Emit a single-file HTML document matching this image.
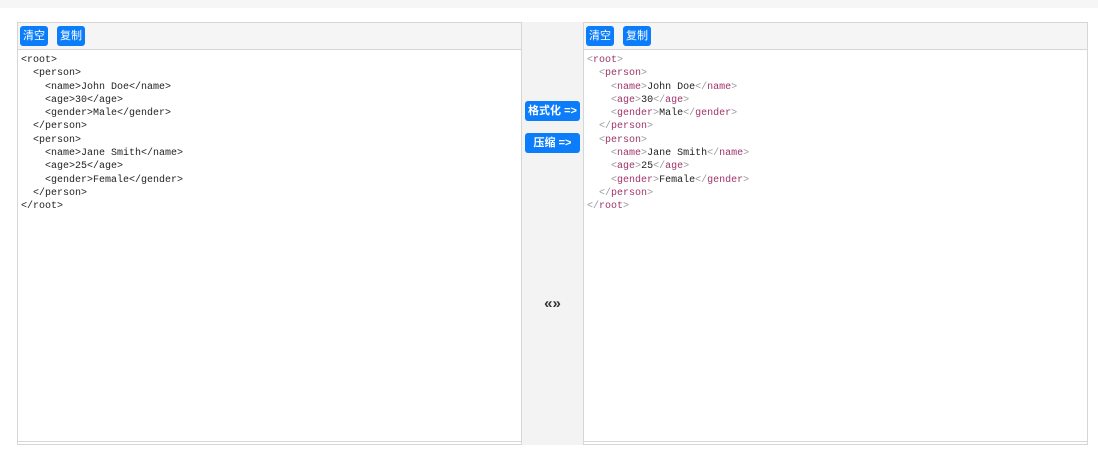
<!DOCTYPE html>
<html><head><meta charset="utf-8"><style>
body{margin:0;width:1098px;height:456px;background:#fff;position:relative;overflow:hidden;font-family:"Liberation Sans","Noto Sans CJK SC",sans-serif}
.top{position:absolute;left:0;top:0;width:1098px;height:8px;background:#f6f6f6}
.panel{position:absolute;top:22px;width:503px;height:418px;border:1px solid #d6d6d6;background:#fff}
.bar{height:26px;background:#f5f5f5;border-bottom:1px solid #d6d6d6;position:relative}
.btn{position:absolute;top:3px;height:20px;background:#0b7dfa;color:#fff;font-size:11px;line-height:20px;text-align:center;border-radius:3px}
pre{margin:0;padding:4px 0 0 3px;font-family:"Liberation Mono","DejaVu Sans Mono",monospace;font-size:10px;line-height:13.3px;color:#222}
.foot{position:absolute;bottom:-4px;left:-1px;width:503px;height:3px;border:1px solid #d6d6d6;border-top:none}
.mid{position:absolute;left:522px;top:22px;width:61px;height:423px;background:#f3f3f3}
.mb{position:absolute;left:3px;width:55px;height:20px;background:#0b7dfa;color:#fff;font-size:11px;font-weight:bold;line-height:20px;text-align:center;border-radius:3px}
.b{color:#999}.t{color:#a0336a}
</style></head><body>
<div class="top"></div>
<div class="panel" style="left:17px">
<div class="bar"><div class="btn" style="left:2px;width:28px">清空</div><div class="btn" style="left:39px;width:28px">复制</div></div>
<pre>&lt;root&gt;
  &lt;person&gt;
    &lt;name&gt;John Doe&lt;/name&gt;
    &lt;age&gt;30&lt;/age&gt;
    &lt;gender&gt;Male&lt;/gender&gt;
  &lt;/person&gt;
  &lt;person&gt;
    &lt;name&gt;Jane Smith&lt;/name&gt;
    &lt;age&gt;25&lt;/age&gt;
    &lt;gender&gt;Female&lt;/gender&gt;
  &lt;/person&gt;
&lt;/root&gt;</pre>
<div class="foot"></div>
</div>
<div class="mid">
<div class="mb" style="top:79px">格式化 =&gt;</div>
<div class="mb" style="top:111px">压缩 =&gt;</div>
<div style="position:absolute;left:0;width:61px;top:273px;text-align:center;font-size:15px;font-weight:bold;color:#333">«»</div>
</div>
<div class="panel" style="left:583px">
<div class="bar"><div class="btn" style="left:2px;width:28px">清空</div><div class="btn" style="left:39px;width:28px">复制</div></div>
<pre><span class="b">&lt;</span><span class="t">root</span><span class="b">&gt;</span>
  <span class="b">&lt;</span><span class="t">person</span><span class="b">&gt;</span>
    <span class="b">&lt;</span><span class="t">name</span><span class="b">&gt;</span>John Doe<span class="b">&lt;/</span><span class="t">name</span><span class="b">&gt;</span>
    <span class="b">&lt;</span><span class="t">age</span><span class="b">&gt;</span>30<span class="b">&lt;/</span><span class="t">age</span><span class="b">&gt;</span>
    <span class="b">&lt;</span><span class="t">gender</span><span class="b">&gt;</span>Male<span class="b">&lt;/</span><span class="t">gender</span><span class="b">&gt;</span>
  <span class="b">&lt;/</span><span class="t">person</span><span class="b">&gt;</span>
  <span class="b">&lt;</span><span class="t">person</span><span class="b">&gt;</span>
    <span class="b">&lt;</span><span class="t">name</span><span class="b">&gt;</span>Jane Smith<span class="b">&lt;/</span><span class="t">name</span><span class="b">&gt;</span>
    <span class="b">&lt;</span><span class="t">age</span><span class="b">&gt;</span>25<span class="b">&lt;/</span><span class="t">age</span><span class="b">&gt;</span>
    <span class="b">&lt;</span><span class="t">gender</span><span class="b">&gt;</span>Female<span class="b">&lt;/</span><span class="t">gender</span><span class="b">&gt;</span>
  <span class="b">&lt;/</span><span class="t">person</span><span class="b">&gt;</span>
<span class="b">&lt;/</span><span class="t">root</span><span class="b">&gt;</span></pre>
<div class="foot"></div>
</div>
</body></html>
